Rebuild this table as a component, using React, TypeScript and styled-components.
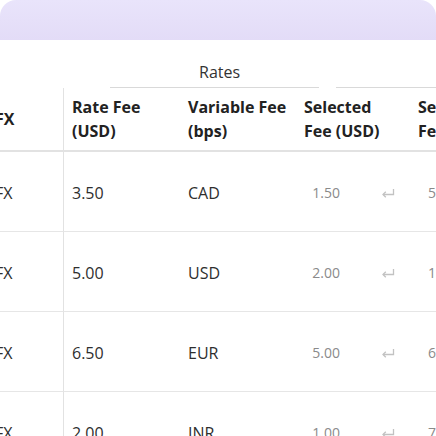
import { Fragment } from "react";
import styled, { createGlobalStyle } from "styled-components";

const GlobalStyle = createGlobalStyle`
  html, body {
    margin: 0;
    padding: 0;
    background: #ffffff;
  }
  body {
    font-family: "Open Sans", "Noto Sans", sans-serif;
    color: #2b2b2b;
  }
`;

const Page = styled.div`
  width: 436px;
  height: 436px;
  overflow: hidden;
`;

const TopBar = styled.div`
  height: 40px;
  border-radius: 16px 16px 0 0;
  background: linear-gradient(180deg, #e9e4fb 0%, #e3dcf7 100%);
`;

const Scroller = styled.div`
  padding-top: 16px;
  margin-left: -13px;
`;

const Grid = styled.div`
  display: grid;
  grid-template-columns: 77px 116px 116px 116px 116px;
  width: max-content;
`;

const GroupSpacer = styled.div`
  height: 32px;
`;

const GroupCell = styled.div`
  grid-column: 2 / -1;
  height: 32px;
  display: flex;
  flex-direction: column;
  justify-content: flex-end;
`;

const GroupLabel = styled.div`
  font-size: 16px;
  line-height: 22px;
  padding-left: 135px;
  color: #333;
  margin-bottom: 4px;
`;

const RuleRow = styled.div`
  display: flex;
  gap: 17px;
  padding-left: 46px;
`;

const GroupRule = styled.span<{ $w: number }>`
  display: block;
  width: ${({ $w }) => $w}px;
  height: 1px;
  background: #d9d9d9;
`;

const HeadCell = styled.div<{ $divider?: boolean; $pad?: number }>`
  height: 62px;
  display: flex;
  align-items: center;
  padding-left: ${({ $pad }) => $pad ?? 8}px;
  padding-right: 8px;
  font-size: 16px;
  font-weight: 700;
  line-height: 24px;
  color: #222;
  border-bottom: 2px solid #e2e2e2;
  border-left: ${({ $divider }) => ($divider ? "1px solid #e2e2e2" : "none")};
  margin-left: ${({ $divider }) => ($divider ? "-1px" : "0")};
`;

const Cell = styled.div<{ $divider?: boolean; $pad?: number }>`
  height: 80px;
  display: flex;
  align-items: center;
  padding-left: ${({ $pad }) => $pad ?? 8}px;
  padding-top: 2px;
  box-sizing: border-box;
  font-size: 16px;
  color: #2e2e2e;
  border-bottom: 1px solid #e6e6e6;
  border-left: ${({ $divider }) => ($divider ? "1px solid #e2e2e2" : "none")};
  margin-left: ${({ $divider }) => ($divider ? "-1px" : "0")};
`;

const FeeValue = styled.span<{ $align?: string }>`
  width: 36px;
  text-align: ${({ $align }) => $align ?? "right"};
  font-size: 14px;
  color: #8a8a8a;
`;

const ReturnIcon = styled.svg`
  margin-left: 41px;
  width: 14px;
  height: 10px;
  flex: none;
`;

const rows = [
  { rate: "3.50", cur: "CAD", fee: "1.50", next: "5.00" },
  { rate: "5.00", cur: "USD", fee: "2.00", next: "1.00" },
  { rate: "6.50", cur: "EUR", fee: "5.00", next: "6.00" },
  { rate: "2.00", cur: "INR", fee: "1.00", next: "7.00" },
];

export default function App() {
  return (
    <Page>
      <GlobalStyle />
      <TopBar />
      <Scroller>
        <Grid>
          <GroupSpacer />
          <GroupCell>
            <GroupLabel>Rates</GroupLabel>
            <RuleRow>
              <GroupRule $w={218} />
              <GroupRule $w={200} />
            </RuleRow>
          </GroupCell>

          <HeadCell>FX</HeadCell>
          <HeadCell $divider>
            Rate Fee
            <br />
            (USD)
          </HeadCell>
          <HeadCell>
            Variable Fee
            <br />
            (bps)
          </HeadCell>
          <HeadCell>
            Selected
            <br />
            Fee (USD)
          </HeadCell>
          <HeadCell $pad={6}>
            Selected
            <br />
            Fee (bps)
          </HeadCell>

          {rows.map((r) => (
            <Fragment key={r.cur}>
              <Cell>FX</Cell>
              <Cell $divider>{r.rate}</Cell>
              <Cell>{r.cur}</Cell>
              <Cell>
                <FeeValue>{r.fee}</FeeValue>
                <ReturnIcon viewBox="0 0 14 10" fill="none">
                  <path d="M12.5 1v5.5H2" stroke="#c2c2c2" strokeWidth="1.3" />
                  <path
                    d="M4.8 3.7L2 6.5l2.8 2.8"
                    stroke="#c2c2c2"
                    strokeWidth="1.3"
                  />
                </ReturnIcon>
              </Cell>
              <Cell $pad={16}>
                <FeeValue $align="left">{r.next}</FeeValue>
              </Cell>
            </Fragment>
          ))}
        </Grid>
      </Scroller>
    </Page>
  );
}
